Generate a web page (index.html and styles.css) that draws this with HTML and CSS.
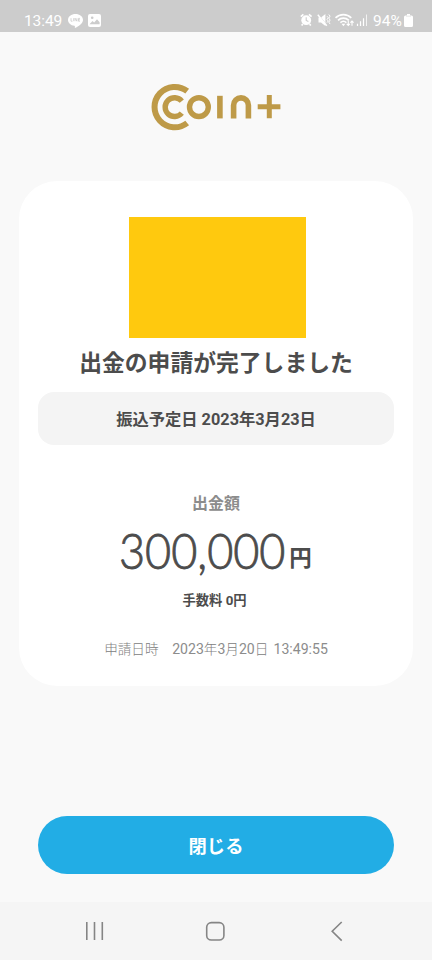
FILE: index.html
```html
<!DOCTYPE html>
<html lang="ja">
<head>
<meta charset="utf-8">
<meta name="viewport" content="width=device-width">
<title>出金の申請</title>
<link rel="stylesheet" href="styles.css">
</head>
<body>
<header class="status">
  <span class="clock">13:49</span>
  <svg class="line" width="15" height="14" viewBox="0 0 15 14"><path d="M7.500 0C3.400 0 0 2.600 0 5.900c0 3 2.700 5.400 6.400 5.800.7.1.5.8.4 1.900 0 .5.4.4.8.2 2.500-1.300 7.400-4.300 7.400-7.900C15 2.600 11.600 0 7.500 0z" fill="#fff"/><path d="M3 4.200v3h1.500M5.700 4.200v3M7 7.200v-3l1.900 3v-3M12 4.400h-1.500v2.800H12M10.500 5.800H12" fill="none" stroke="#ccc" stroke-width=".8"/></svg>
  <svg class="photo" width="13" height="13" viewBox="0 0 13 13"><rect width="13" height="13" rx="2" fill="#fff"/><circle cx="4.200" cy="3.800" r="1.300" fill="#ccc"/><path d="M1.500 10.200l3-3.200 1.700 1.500 2.800-3.300 2.600 3v2z" fill="#ccc"/></svg>
  <div class="signals">
    <svg class="indicators" width="74" height="16" viewBox="0 0 74 16" fill="none" stroke="#fff">
      <circle cx="6.200" cy="8.200" r="4.900" fill="#fff" stroke="none"/><path d="M.8 4.600l2.600-2.200M11.600 4.600L9 2.400M2.800 12.200l-1.200 1.300M9.600 12.200l1.200 1.300" stroke-width="1.700"/><path d="M6.200 5.200v3.200l2.200 1.200" stroke="#ccc" stroke-width="1.100"/>
      <path d="M18.500 5.600h2.500l4.400-3.500v11.800l-4.400-3.500h-2.500z" fill="#fff" stroke="none"/><path d="M18.500 2.500l8.500 11" stroke="#ccc" stroke-width="1"/><path d="M17.800 2.700l9 11" stroke-width="1.400"/><path d="M27 4.200l1.300 1.600-1.300 1.600 1.300 1.600-1.300 1.600M28.800 2.500l1.300 1.600-1.300 2 1.300 2-1.300 2 1.300 2" stroke-width="1"/>
      <path d="M35.500 5.900c4.300-4.400 11.500-4.400 15.800 0M38 8.400c3.100-3 7.700-3 10.800 0M40.400 10.600c1.800-1.600 4.200-1.600 6 0" stroke-width="1.600"/><path d="M41.500 11.800h3.800l-1.900 2.400z" fill="#fff" stroke="none"/><path d="M48.300 8.700v4.800M46.700 11.800l1.600 1.600 1.600-1.600M52 13.700V8.900M50.400 10.600l1.600-1.600 1.600 1.600" stroke-width="1.100"/>
      <path d="M57.500 14v-2.200M60.500 14V9.200M63.500 14V6.300" stroke-width="1.200"/><path d="M66.500 14V2.500" stroke-opacity=".75"/>
    </svg>
    <span class="percent">94%</span>
    <svg class="battery" width="9" height="13" viewBox="0 0 9 13"><path d="M3 0h3v1.500h1.500Q9 1.500 9 3v8.500Q9 13 7.500 13h-6Q0 13 0 11.500V3Q0 1.500 1.500 1.500H3z" fill="#fff"/><path d="M2 2.200h5" stroke="#e8e8e8"/></svg>
  </div>
</header>
<main class="page">
  <svg class="logo" width="130" height="48" viewBox="151 83 130 48" fill="none" stroke="#be9a48" role="img" aria-label="COIN+">
    <path d="M187.200 91.200A20.200 20.200 0 1 0 187.200 123" stroke-width="6"/>
    <path d="M181.800 101.100A9.400 9.400 0 1 0 181.800 113.100" stroke-width="5.400"/>
    <circle cx="198.900" cy="107.100" r="9.400" stroke-width="5.400"/>
    <path d="M219.900 95.800v22.600" stroke-width="5.600"/>
    <path d="M233.600 118.400v-13.100a7.400 7.400 0 0 1 14.800 0v13.100" stroke-width="5.600"/>
    <path d="M257.700 106.700h22.700M269.300 95v23.200" stroke-width="5"/>
  </svg>
  <section class="card">
    <div class="picture"></div>
    <h1>出金の申請が完了しました</h1>
    <p class="schedule">振込予定日 2023年3月23日</p>
    <p class="label">出金額</p>
    <p class="amount"><span class="number">300,000</span><span class="yen">円</span></p>
    <p class="fee">手数料 0円</p>
    <p class="time">申請日時　<span class="digits">2023</span>年<span class="digits">3</span>月<span class="digits">20</span>日 <span class="digits">13:49:55</span></p>
  </section>
  <button class="close" type="button">閉じる</button>
</main>
<nav class="nav">
  <svg width="432" height="58" viewBox="0 0 432 58" fill="none" stroke="#858585" stroke-width="1.600"><path d="M86.800 20v18M94.500 20v18M102.300 20v18"/><rect x="206.700" y="20.600" width="17.200" height="17.400" rx="4.600"/><path d="M341.700 20l-9.500 9.200 9.500 9.400"/></svg>
</nav>
</body>
</html>
```
FILE: styles.css
```css
* { box-sizing: border-box; }

body {
  margin: 0;
  width: 432px;
  height: 960px;
  display: flex;
  flex-direction: column;
  overflow: hidden;
  background: #f9f9f9;
  color: #4c4c4c;
  font-family: Roboto, "Noto Sans CJK JP", sans-serif;
}

h1, p { margin: 0; white-space: nowrap; }
svg { display: block; flex: none; }

.status {
  height: 32px;
  flex: none;
  display: flex;
  align-items: flex-start;
  padding: 12px 19px 0 24px;
  background: #ccc;
  color: #fff;
  font-size: 15.500px;
  line-height: 18px;
}
.clock { width: 44px; letter-spacing: -.1px; }
.line { margin-top: 2px; }
.photo { margin: 2px 0 0 5px; }
.signals { display: flex; margin-left: auto; }
.percent { width: 31px; margin-left: -1px; }
.battery { margin-top: 2px; }

.page {
  flex: 1;
  display: flex;
  flex-direction: column;
  align-items: center;
}
.logo { margin-top: 51px; }

.card {
  width: 394px;
  height: 505px;
  margin-top: 50px;
  padding: 36px 19px 0;
  display: flex;
  flex-direction: column;
  align-items: center;
  background: #fff;
  border-radius: 38px;
}
.picture {
  width: 177px;
  height: 121px;
  margin-left: 3px;
  background: #ffc90e;
}
h1 {
  margin-top: 9px;
  font-size: 22.800px;
  line-height: 34px;
  font-weight: 700;
}
.schedule {
  width: 356px;
  height: 53px;
  margin-top: 11px;
  border-radius: 16px;
  background: #f4f4f4;
  font-size: 16.300px;
  line-height: 55px;
  font-weight: 700;
  text-align: center;
}
.label {
  margin-top: 47px;
  color: #8c8c8c;
  font-size: 16px;
  line-height: 24px;
  font-weight: 700;
}
.amount {
  height: 50px;
  margin-top: 12px;
  display: flex;
  align-items: flex-start;
  line-height: 50px;
}
.number {
  width: 166px;
  margin-top: -3px;
  margin-left: -1px;
  font-family: Lato, sans-serif;
  font-size: 50px;
  font-weight: 300;
  -webkit-text-stroke: .9px #4c4c4c;
  transform: scaleX(.9);
  transform-origin: left;
}
.yen { margin: 5px 0 0 4px; font-size: 22.500px; font-weight: 700; }
.fee {
  margin-top: 13px;
  margin-right: 3px;
  font-size: 13.300px;
  line-height: 20px;
  font-weight: 700;
}
.time {
  margin-top: 28px;
  color: #808080;
  font-size: 13.600px;
  line-height: 20px;
  font-weight: 300;
  word-spacing: 1.800px;
}
.digits { color: #8c8c8c; font-size: 14.100px; font-weight: 400; }
.close {
  width: 356px;
  height: 58px;
  margin-top: 130px;
  padding: 0;
  border: 0;
  border-radius: 29px;
  background: #22ade5;
  color: #fff;
  font: 700 18.300px/58px "Noto Sans CJK JP", sans-serif;
}
.nav { height: 58px; flex: none; background: #f5f5f5; }
```
